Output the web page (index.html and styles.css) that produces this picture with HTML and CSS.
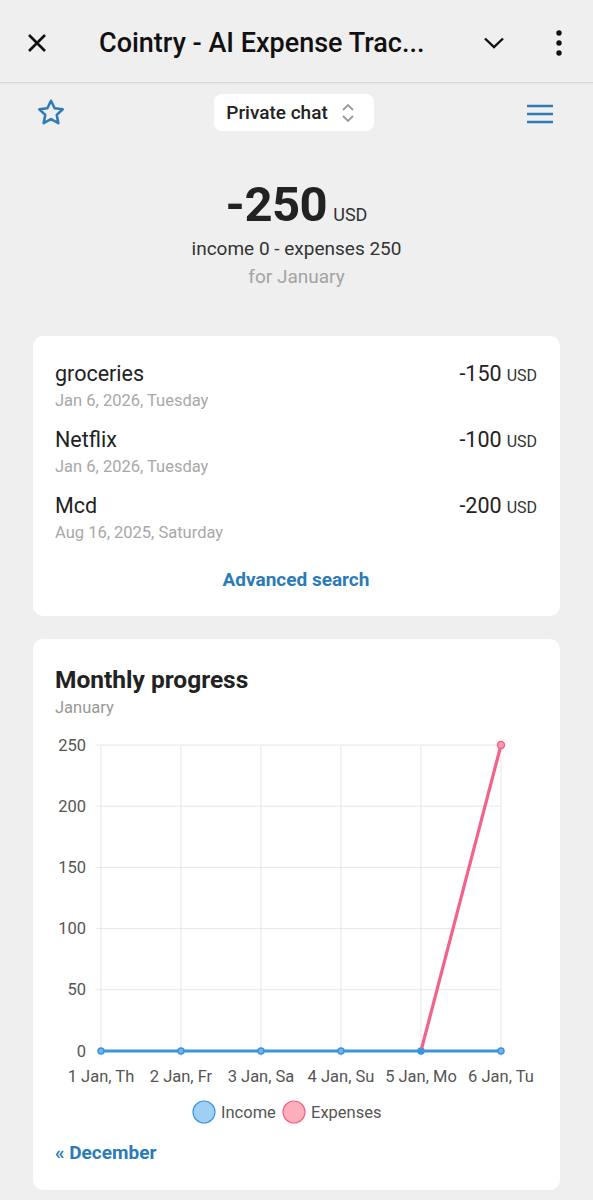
FILE: index.html
```html
<!DOCTYPE html>
<html lang="en">
<head>
    <meta charset="UTF-8">
    <meta name="viewport" content="width=device-width, initial-scale=1.0">
    <title>Cointry - AI Expense Tracker</title>
    <link rel="stylesheet" href="styles.css">
</head>
<body>
    <div class="topbar">
        <svg class="icon-close" width="22" height="22" viewBox="0 0 22 22">
            <path d="M3 3 L19 19 M19 3 L3 19" stroke="#111" stroke-width="2.6" fill="none"/>
        </svg>
        <div class="title">Cointry - AI Expense Trac...</div>
        <svg class="icon-chevron" width="24" height="24" viewBox="0 0 24 24">
            <path d="M3 7.5 L12 16 L21 7.5" stroke="#111" stroke-width="2.4" fill="none"/>
        </svg>
        <svg class="icon-kebab" width="8" height="26" viewBox="0 0 8 26">
            <circle cx="4" cy="3" r="2.7" fill="#111"/>
            <circle cx="4" cy="13" r="2.7" fill="#111"/>
            <circle cx="4" cy="23" r="2.7" fill="#111"/>
        </svg>
    </div>

    <div class="toolbar">
        <svg class="icon-star" width="32" height="32" viewBox="0 0 30 30">
            <path d="M15 3.5 L18.4 10.6 L26 11.5 L20.4 16.8 L21.9 24.5 L15 20.7 L8.1 24.5 L9.6 16.8 L4 11.5 L11.6 10.6 Z" stroke="#2f7cb8" stroke-width="2.4" stroke-linejoin="round" fill="none"/>
        </svg>
        <div class="chat-select">
            <span>Private chat</span>
            <svg width="14" height="20" viewBox="0 0 14 20">
                <path d="M2 7 L7 2 L12 7 M2 13 L7 18 L12 13" stroke="#9a9a9a" stroke-width="1.8" fill="none"/>
            </svg>
        </div>
        <svg class="icon-menu" width="26" height="20" viewBox="0 0 26 20">
            <path d="M0 2 H26 M0 10 H26 M0 18 H26" stroke="#2f7cb8" stroke-width="2.6"/>
        </svg>
    </div>

    <div class="summary">
        <div class="balance"><span class="balance-num">-250</span><span class="balance-cur">USD</span></div>
        <div class="balance-line">income 0 - expenses 250</div>
        <div class="balance-period">for January</div>
    </div>

    <div class="card">
        <div class="tx">
            <div class="tx-main"><span>groceries</span><span>-150<small>USD</small></span></div>
            <div class="tx-date">Jan 6, 2026, Tuesday</div>
        </div>
        <div class="tx">
            <div class="tx-main"><span>Netflix</span><span>-100<small>USD</small></span></div>
            <div class="tx-date">Jan 6, 2026, Tuesday</div>
        </div>
        <div class="tx">
            <div class="tx-main"><span>Mcd</span><span>-200<small>USD</small></span></div>
            <div class="tx-date">Aug 16, 2025, Saturday</div>
        </div>
        <a class="link center-link" href="#">Advanced search</a>
    </div>

    <div class="card chart-card">
        <h2>Monthly progress</h2>
        <div class="subtitle">January</div>
        <svg class="chart" width="483" height="400" viewBox="0 0 483 400">
            <g stroke="#e6e6e6" stroke-width="1">
                <line x1="41" y1="14" x2="446" y2="14"/>
                <line x1="41" y1="75.2" x2="446" y2="75.2"/>
                <line x1="41" y1="136.4" x2="446" y2="136.4"/>
                <line x1="41" y1="197.6" x2="446" y2="197.6"/>
                <line x1="41" y1="258.8" x2="446" y2="258.8"/>
                <line x1="46" y1="14" x2="46" y2="326"/>
                <line x1="126" y1="14" x2="126" y2="326"/>
                <line x1="206" y1="14" x2="206" y2="326"/>
                <line x1="286" y1="14" x2="286" y2="326"/>
                <line x1="366" y1="14" x2="366" y2="326"/>
                <line x1="446" y1="14" x2="446" y2="326"/>
            </g>
            <g class="axis-label" text-anchor="end">
                <text x="31" y="19.5">250</text>
                <text x="31" y="80.5">200</text>
                <text x="31" y="141.5">150</text>
                <text x="31" y="203">100</text>
                <text x="31" y="264">50</text>
                <text x="31" y="325.5">0</text>
            </g>
            <g class="axis-label" text-anchor="middle">
                <text x="46" y="351">1 Jan, Th</text>
                <text x="126" y="351">2 Jan, Fr</text>
                <text x="206" y="351">3 Jan, Sa</text>
                <text x="286" y="351">4 Jan, Su</text>
                <text x="366" y="351">5 Jan, Mo</text>
                <text x="446" y="351">6 Jan, Tu</text>
            </g>
            <polyline points="46,320 446,320" stroke="#3b95dd" stroke-width="3" fill="none"/>
            <g fill="#6fb4ea" stroke="#3b95dd" stroke-width="1.5">
                <circle cx="46" cy="320" r="3"/>
                <circle cx="126" cy="320" r="3"/>
                <circle cx="206" cy="320" r="3"/>
                <circle cx="286" cy="320" r="3"/>
                <circle cx="366" cy="320" r="3"/>
                <circle cx="446" cy="320" r="3"/>
            </g>
            <polyline points="366,320 446,14" stroke="#f3628a" stroke-width="3.2" fill="none"/>
            <circle cx="446" cy="14" r="3.5" fill="#f99ab3" stroke="#f3628a" stroke-width="1.5"/>
            <circle cx="366" cy="320" r="3" fill="#3b95dd"/>
            <g class="legend">
                <circle cx="149" cy="381" r="11" fill="#9fcff3" stroke="#3b95dd" stroke-width="1.2"/>
                <text x="166" y="387">Income</text>
                <circle cx="239" cy="381" r="11" fill="#fcaebd" stroke="#f3628a" stroke-width="1.2"/>
                <text x="256" y="387">Expenses</text>
            </g>
        </svg>
        <a class="link" href="#">« December</a>
    </div>
</body>
</html>
```

FILE: styles.css
```css
body {
    margin: 0;
    background: #efefef;
    font-family: Roboto, "Liberation Sans", sans-serif;
    color: #222;
}

.topbar {
    height: 82px;
    display: flex;
    align-items: center;
    border-bottom: 1px solid #d9d9d9;
    box-shadow: 0 1px 2px rgba(0, 0, 0, 0.05);
}
.icon-close { margin-left: 26px; margin-top: 4px; }
.title {
    margin-left: 51px;
    font-size: 27px;
    font-weight: 500;
    color: #111;
    flex: 1;
    margin-top: 4px;
}
.icon-chevron { margin-right: 49px; margin-top: 4px; }
.icon-kebab { margin-right: 30px; margin-top: 4px; }

.toolbar {
    display: grid;
    grid-template-columns: 1fr auto 1fr;
    align-items: center;
    padding: 11px 40px 0 35px;
}
.icon-star { margin-top: 1px; }
.icon-menu { justify-self: end; margin-top: 2px; }
.chat-select {
    display: flex;
    align-items: center;
    gap: 13px;
    height: 37px;
    padding: 0 19px 0 12px;
    background: white;
    border-radius: 8px;
    font-size: 19px;
    font-weight: 500;
    color: #222;
}

.summary { text-align: center; padding-top: 46px; }
.balance { font-size: 49px; line-height: 56px; }
.balance-num { font-weight: 700; color: #222; letter-spacing: -0.5px; }
.balance-cur { font-size: 18px; line-height: 1; margin-left: 6px; color: #333; }
.balance-line { margin-top: 2px; font-size: 19px; line-height: 28px; color: #333; }
.balance-period { font-size: 19px; line-height: 28px; color: #a3a3a3; }

.card {
    background: white;
    border-radius: 10px;
    margin: 45px 33px 0;
    padding: 25px 23px 24px 22px;
}
.card + .card { margin-top: 23px; }

.tx { margin-bottom: 12px; }
.tx-main {
    display: flex;
    justify-content: space-between;
    align-items: baseline;
    font-size: 21.5px;
    line-height: 26px;
    color: #222;
}
.tx-main small { font-size: 16px; line-height: 1; margin-left: 5px; color: #333; }
.tx-date { font-size: 16.5px; line-height: 28px; color: #a8a8a8; }

.link {
    display: block;
    font-size: 19px;
    font-weight: 700;
    line-height: 24px;
    color: #2a7bb8;
    text-decoration: none;
}
.center-link { text-align: center; margin-top: 21px; }

.chart-card { padding: 24px 23px 25px 22px; }
.chart-card h2 { margin: 0; font-size: 24.5px; font-weight: 700; line-height: 34px; color: #222; }
.subtitle { font-size: 16.5px; line-height: 22px; color: #999; }
.chart { display: block; margin-top: 12px; }
.axis-label { font-size: 16.5px; fill: #555; font-family: Roboto, "Liberation Sans", sans-serif; }
.legend text { font-size: 16.5px; fill: #555; font-family: Roboto, "Liberation Sans", sans-serif; }
.chart-card .link { margin-top: 10px; }
```
